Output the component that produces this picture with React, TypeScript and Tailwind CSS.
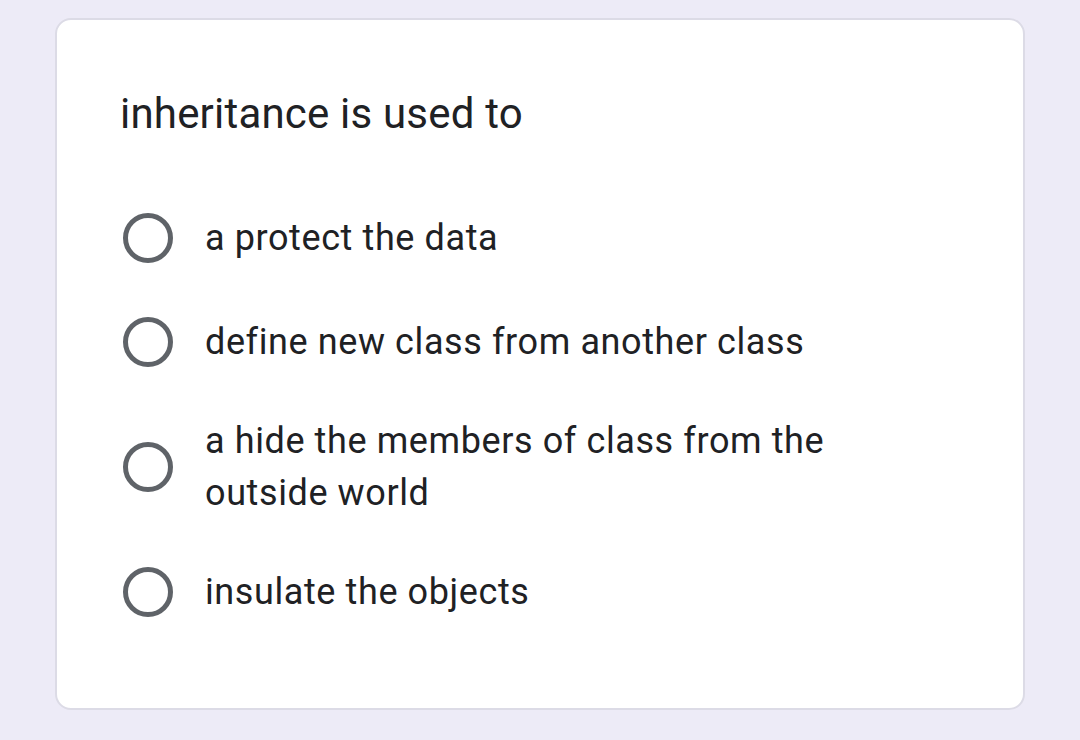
import React from 'react';

const options = [
  'a protect the data',
  'define new class from another class',
  'a hide the members of class from the outside world',
  'insulate the objects',
];

function Radio() {
  return <span className="block w-[50px] h-[50px] shrink-0 rounded-full border-[5px] border-[#5f6368]" />;
}

export default function App() {
  return (
    <div className="w-[1080px] h-[740px] bg-[#edebf7] pt-[18px] px-[55px] overflow-hidden" style={{ fontFamily: 'Roboto, "Liberation Sans", sans-serif' }}>
      <div className="w-[970px] h-[692px] bg-white rounded-[16px] border-2 border-[#dcdbe6] pl-[63px] pr-[40px] pt-[70px]">
        <div className="text-[42px] leading-[48px] tracking-[0.2px] text-[#202124]">inheritance is used to</div>
        <div className="mt-[48px] flex flex-col">
          {options.map((o, i) => (
            <div key={i} className={`flex items-center gap-[32px] pl-[3px] ${i === 2 ? 'py-[21px]' : 'py-[26px]'}`}>
              <Radio />
              <span className="text-[36px] leading-[52px] tracking-[0.6px] text-[#202124] max-w-[660px]">{o}</span>
            </div>
          ))}
        </div>
      </div>
    </div>
  );
}
